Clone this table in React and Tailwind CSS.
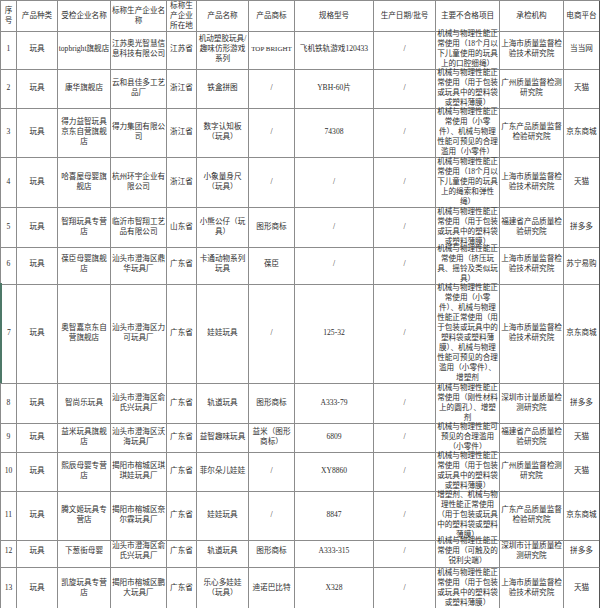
const cols =
  'grid grid-cols-[17px_41px_53px_56px_30px_52px_46px_79px_62px_64px_64px_36px]'

const header = [
  '序号',
  '产品种类',
  '受检企业名称',
  '标称生产企业名称',
  '标称生产企业所在地',
  '产品名称',
  '产品商标',
  '规格型号',
  '生产日期/批号',
  '主要不合格项目',
  '承检机构',
  '电商平台',
]

const rows = [
  {
    h: 'h-[39px]',
    c: ['1', '玩具', 'topbright旗舰店', '江苏奥光智慧信息科技有限公司', '江苏省', '机动塑胶玩具/趣味仿形游戏系列', 'TOP BRIGHT', '飞机铁轨游戏120433', '/', '机械与物理性能正常使用（18个月以下儿童使用的玩具上的口腔细绳）', '上海市质量监督检验技术研究院', '当当网'],
  },
  {
    h: 'h-[39px]',
    c: ['2', '玩具', '康华旗舰店', '云和县佳多工艺品厂', '浙江省', '铁盒拼图', '/', 'YBH-60片', '/', '机械与物理性能正常使用（用于包装或玩具中的塑料袋或塑料薄膜）', '广州质量监督检测研究院', '天猫'],
  },
  {
    h: 'h-[50px]',
    c: ['3', '玩具', '得力益智玩具京东自营旗舰店', '得力集团有限公司', '浙江省', '数字认知板（玩具）', '/', '74308', '/', '机械与物理性能正常使用（小零件）、机械与物理性能可预见的合理滥用（小零件）', '广东产品质量监督检验研究院', '京东商城'],
  },
  {
    h: 'h-[50px]',
    c: ['4', '玩具', '哈喜屋母婴旗舰店', '杭州环宇企业有限公司', '浙江省', '小象量身尺（玩具）', '/', '/', '/', '机械与物理性能正常使用（18个月以下儿童使用的玩具上的绳索和弹性绳）', '上海市质量监督检验技术研究院', '天猫'],
  },
  {
    h: 'h-[37px]',
    c: ['5', '玩具', '智翔玩具专营店', '临沂市智翔工艺品有限公司', '山东省', '小熊公仔（玩具）', '图形商标', '/', '/', '机械与物理性能正常使用（用于包装或玩具中的塑料袋或塑料薄膜）', '福建省产品质量检验研究院', '拼多多'],
  },
  {
    h: 'h-[39px]',
    c: ['6', '玩具', '葆臣母婴旗舰店', '汕头市澄海区鼎华玩具厂', '广东省', '卡通动物系列玩具', '葆臣', '/', '/', '机械与物理性能正常使用（挤压玩具、摇铃及类似玩具）', '上海市质量监督检验技术研究院', '苏宁易购'],
  },
  {
    h: 'h-[100px]',
    mark: true,
    c: ['7', '玩具', '奥智嘉京东自营旗舰店', '汕头市澄海区力可玩具厂', '广东省', '娃娃玩具', '/', '125-32', '/', '机械与物理性能正常使用（小零件）、机械与物理性能正常使用（用于包装或玩具中的塑料袋或塑料薄膜）、机械与物理性能可预见的合理滥用（小零件）、增塑剂', '上海市质量监督检验技术研究院', '京东商城'],
  },
  {
    h: 'h-[39px]',
    c: ['8', '玩具', '智尚乐玩具', '汕头市澄海区俞氏兴玩具厂', '广东省', '轨道玩具', '图形商标', 'A333-79', '/', '机械与物理性能正常使用（刚性材料上的圆孔）、增塑剂', '深圳市计量质量检测研究院', '拼多多'],
  },
  {
    h: 'h-[29px]',
    c: ['9', '玩具', '益米玩具旗舰店', '汕头市澄海区沃海玩具厂', '广东省', '益智趣味玩具', '益米（图形商标）', '6809', '/', '机械与物理性能可预见的合理滥用（小零件）', '福建省产品质量检验研究院', '天猫'],
  },
  {
    h: 'h-[39px]',
    c: ['10', '玩具', '熙辰母婴专营店', '揭阳市榕城区琪琪娃玩具厂', '广东省', '菲尔朵儿娃娃', '/', 'XY8860', '/', '机械与物理性能正常使用（用于包装或玩具中的塑料袋或塑料薄膜）', '广州质量监督检测研究院', '天猫'],
  },
  {
    h: 'h-[45px]',
    c: ['11', '玩具', '腾文姬玩具专营店', '揭阳市榕城区奈尔霖玩具厂', '广东省', '娃娃玩具', '/', '8847', '/', '增塑剂、机械与物理性能正常使用（用于包装或玩具中的塑料袋或塑料薄膜）', '广东产品质量监督检验研究院', '京东商城'],
  },
  {
    h: 'h-[33px]',
    c: ['12', '玩具', '下葱街母婴', '汕头市澄海区俞氏兴玩具厂', '广东省', '轨道玩具', '图形商标', 'A333-315', '/', '机械与物理性能正常使用（可触及的锐利尖端）', '深圳市计量质量检测研究院', '拼多多'],
  },
  {
    h: 'h-[38px]',
    c: ['13', '玩具', '凯旋玩具专营店', '揭阳市榕城区鹏大玩具厂', '广东省', '乐心多娃娃（玩具）', '迪诺巴比特', 'X328', '/', '机械与物理性能正常使用（用于包装或玩具中的塑料袋或塑料薄膜）', '上海市质量监督检验技术研究院', '天猫'],
  },
]

function Cell({ children, first, last, mark }) {
  return (
    <div
      className={`flex items-center justify-center text-center border-r border-b border-[#8c8c8c] ${
        first && mark ? 'border-l-2 border-l-[#4d7868]' : ''
      } ${first ? 'border-l' : ''} ${last ? 'border-r-[#555]' : ''}`}
    >
      <span className={children === 'TOP BRIGHT' ? 'whitespace-nowrap text-[7px]' : ''}>{children}</span>
    </div>
  )
}

export default function App() {
  return (
    <div className="w-[600px] h-[608px] bg-white overflow-hidden font-['Liberation_Serif','Noto_Sans_CJK_SC',serif] text-[7.6px] leading-[10px] text-[#2e2e2e]">
      <div className={`${cols} h-[29px] border-t border-[#8c8c8c]`}>
        {header.map((t, i) => (
          <Cell key={i} first={i === 0} last={i === 11}>
            {t}
          </Cell>
        ))}
      </div>
      {rows.map((r, ri) => (
        <div key={ri} className={`${cols} ${r.h}`}>
          {r.c.map((t, i) => (
            <Cell key={i} first={i === 0} last={i === 11} mark={r.mark}>
              {t}
            </Cell>
          ))}
        </div>
      ))}
    </div>
  )
}
